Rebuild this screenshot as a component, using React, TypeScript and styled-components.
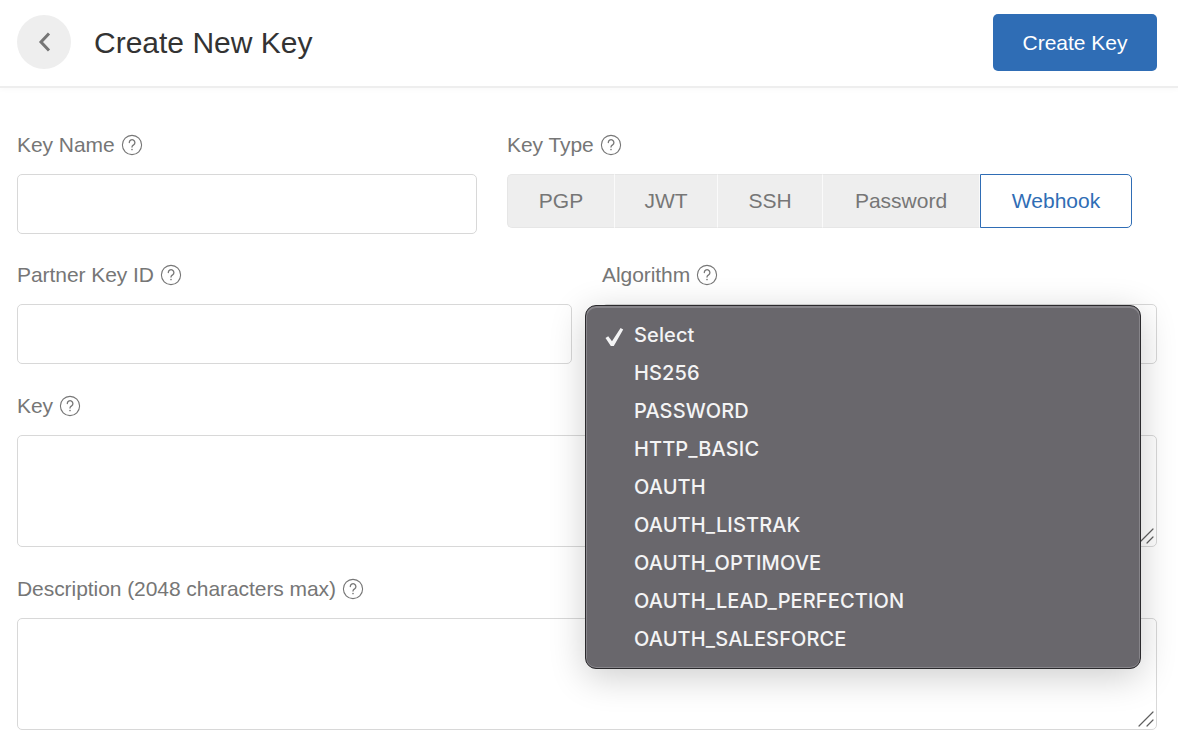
import React from "react";
import styled, { createGlobalStyle } from "styled-components";

const Global = createGlobalStyle`
  html, body { margin: 0; padding: 0; background: #fff; }
  body { font-family: "Liberation Sans", Arial, sans-serif; width: 1178px; height: 752px; overflow: hidden; }
  * { box-sizing: border-box; }
`;

const Page = styled.div`
  position: relative;
  width: 1178px;
  height: 752px;
  overflow: hidden;
`;

const Header = styled.header`
  display: flex;
  align-items: center;
  height: 88px;
  padding: 0 21px 1px 17px;
  border-bottom: 2px solid #eeeeee;
  box-shadow: 0 2px 5px rgba(0, 0, 0, 0.025);
`;

const BackButton = styled.button`
  display: flex;
  align-items: center;
  justify-content: center;
  flex: none;
  width: 54px;
  height: 54px;
  margin-bottom: 2px;
  padding: 0;
  border: 0;
  border-radius: 50%;
  background: #eeeeee;
  color: #757575;
`;

const Title = styled.h1`
  flex: 1;
  margin: 1px 0 0 23px;
  font-size: 30px;
  font-weight: 400;
  color: #333333;
`;

const PrimaryButton = styled.button`
  width: 164px;
  height: 57px;
  padding: 0;
  border: 0;
  border-radius: 5px;
  background: #2f6db5;
  color: #ffffff;
  font-family: inherit;
  font-size: 21px;
`;

const Form = styled.form`
  display: flex;
  flex-direction: column;
  padding: 44px 21px 0 17px;
`;

const Row = styled.div<{ $columns: string; $gap: number; $height: number }>`
  display: grid;
  grid-template-columns: ${(p) => p.$columns};
  column-gap: ${(p) => p.$gap}px;
  height: ${(p) => p.$height}px;
`;

const Field = styled.div`
  display: flex;
  flex-direction: column;
  min-width: 0;
`;

const Label = styled.label`
  display: flex;
  align-items: center;
  gap: 6px;
  height: 26px;
  margin-bottom: 16px;
  font-size: 21px;
  letter-spacing: -0.06px;
  color: #767676;
`;

const TextInput = styled.input`
  width: 100%;
  height: 60px;
  border: 1px solid #d8d8d8;
  border-radius: 5px;
  background: #fff;
`;

const AreaWrap = styled.div`
  position: relative;
  height: 112px;
`;

const TextArea = styled.textarea`
  display: block;
  width: 100%;
  height: 100%;
  border: 1px solid #d8d8d8;
  border-radius: 5px;
  background: #fff;
  resize: none;
`;

const Grip = styled.svg`
  position: absolute;
  right: 3px;
  bottom: 3px;
  width: 16px;
  height: 16px;
`;

const Segments = styled.div`
  display: flex;
  width: 625px;
  height: 54px;
`;

const Segment = styled.button<{ $width: number; $active?: boolean; $first?: boolean }>`
  width: ${(p) => p.$width}px;
  height: 54px;
  padding: 0;
  font-family: inherit;
  font-size: 21px;
  color: ${(p) => (p.$active ? "#2f6db5" : "#767676")};
  background: ${(p) => (p.$active ? "#ffffff" : "#eeeeee")};
  border-style: solid;
  border-width: ${(p) => (p.$active ? "1px" : p.$first ? "1px 1px 1px 1px" : "1px 1px 1px 0")};
  border-color: ${(p) => (p.$active ? "#2f6db5" : "#e6e6e6 #fafafa #e6e6e6 #e6e6e6")};
  border-radius: ${(p) => (p.$active ? "0 5px 5px 0" : p.$first ? "5px 0 0 5px" : "0")};
`;

const Menu = styled.ul`
  position: absolute;
  left: 585px;
  top: 305px;
  width: 556px;
  height: 364px;
  margin: 0;
  padding: 10px 0 0;
  list-style: none;
  background: #69676c;
  border: 1px solid #2b2a2d;
  border-radius: 11px;
  box-shadow: inset 0 1px 0 1px #87858a, inset 0 -1px 0 0 #87858a, 0 8px 36px rgba(0, 0, 0, 0.2);
`;

const MenuItem = styled.li`
  position: relative;
  height: 38px;
  padding-left: 48px;
  font-family: Inter, "Liberation Sans", sans-serif;
  font-size: 20px;
  font-weight: 500;
  letter-spacing: 0.12px;
  line-height: 38px;
  color: #f4f4f5;
`;

const Check = styled.svg`
  position: absolute;
  left: 17px;
  top: 9px;
  width: 24px;
  height: 24px;
`;

const HelpIcon = () => (
  <svg width="22" height="22" viewBox="0 0 22 22" fill="none" stroke="#767676" aria-hidden="true">
    <circle cx="11" cy="11" r="9.600" strokeWidth="1.100" />
    <path d="M8.300 8.600a2.800 2.800 0 1 1 4.300 2.300c-1 .6-1.600 1.100-1.600 2.200" strokeWidth="1.300" strokeLinecap="round" />
    <circle cx="11" cy="15.600" r=".8" fill="#767676" stroke="none" />
  </svg>
);

const ResizeGrip = () => (
  <Grip viewBox="0 0 16 16" fill="none" stroke="#5f5f5f" strokeWidth="1.200" strokeLinecap="round" aria-hidden="true">
    <path d="M1 15 15 1M9 15l6-6" />
  </Grip>
);

const ALGORITHMS = [
  "Select",
  "HS256",
  "PASSWORD",
  "HTTP_BASIC",
  "OAUTH",
  "OAUTH_LISTRAK",
  "OAUTH_OPTIMOVE",
  "OAUTH_LEAD_PERFECTION",
  "OAUTH_SALESFORCE",
];

const KEY_TYPES = [
  { name: "PGP", width: 108 },
  { name: "JWT", width: 103 },
  { name: "SSH", width: 105 },
  { name: "Password", width: 157 },
  { name: "Webhook", width: 152 },
];

export default function App() {
  return (
    <Page>
      <Global />
      <Header>
        <BackButton type="button" aria-label="Back">
          <svg width="16" height="22" viewBox="0 0 16 22" fill="none" stroke="currentColor" strokeWidth="3" aria-hidden="true">
            <path d="M13 2.500 5 11l8 8.500" />
          </svg>
        </BackButton>
        <Title>Create New Key</Title>
        <PrimaryButton type="button">Create Key</PrimaryButton>
      </Header>
      <Form>
        <Row $columns="460px 625px" $gap={30} $height={130}>
          <Field>
            <Label>Key Name <HelpIcon /></Label>
            <TextInput />
          </Field>
          <Field>
            <Label>Key Type <HelpIcon /></Label>
            <Segments>
              {KEY_TYPES.map((t, i) => (
                <Segment key={t.name} type="button" $width={t.width} $first={i === 0} $active={t.name === "Webhook"}>
                  {t.name}
                </Segment>
              ))}
            </Segments>
          </Field>
        </Row>
        <Row $columns="555px 555px" $gap={30} $height={131}>
          <Field>
            <Label>Partner Key ID <HelpIcon /></Label>
            <TextInput />
          </Field>
          <Field>
            <Label>Algorithm <HelpIcon /></Label>
            <TextInput />
          </Field>
        </Row>
        <Row $columns="1fr" $gap={0} $height={183}>
          <Field>
            <Label>Key <HelpIcon /></Label>
            <AreaWrap>
              <TextArea />
              <ResizeGrip />
            </AreaWrap>
          </Field>
        </Row>
        <Row $columns="1fr" $gap={0} $height={155}>
          <Field>
            <Label>Description (2048 characters max) <HelpIcon /></Label>
            <AreaWrap>
              <TextArea />
              <ResizeGrip />
            </AreaWrap>
          </Field>
        </Row>
      </Form>
      <Menu>
        {ALGORITHMS.map((a, i) => (
          <MenuItem key={a}>
            {i === 0 && (
              <Check viewBox="0 0 24 24" fill="#f4f4f5" aria-hidden="true">
                <path d="M2.500 13 5.200 11.200l3.800 5L17.600 3l2.600 1.500L10.800 21H7.800z" />
              </Check>
            )}
            {a}
          </MenuItem>
        ))}
      </Menu>
    </Page>
  );
}
